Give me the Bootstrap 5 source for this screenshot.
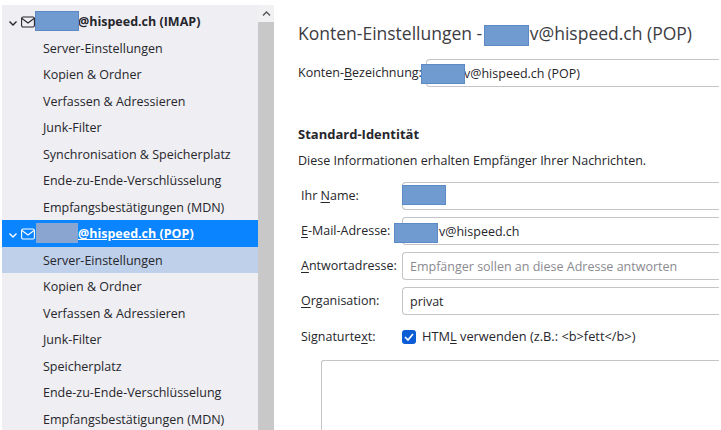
<!DOCTYPE html>
<html lang="de">
<head>
  <meta charset="UTF-8">
  <title>Konten-Einstellungen</title>
  <link href="https://cdn.jsdelivr.net/npm/bootstrap@5.3.0/dist/css/bootstrap.min.css" rel="stylesheet">
  <style>
    html, body { height: 430px; overflow: hidden; background: #fff; }
    body { font-family: "Open Sans", "Noto Sans", sans-serif; font-size: 12.5px; color: #26262b; }
    .acct-shell { height: 430px; overflow: hidden; }
    .acct-side { width: 274px; padding-top: 5px; background: #fff; flex: none; }
    .acct-tree { width: 256px; margin-left: 2px; background: #eeeef3; padding-top: 3px; height: 425px; overflow: hidden; }
    .acct-scroll { width: 16px; background: #f1f1f3; }
    .acct-thumb { background: #c8c8c8; height: 408px; }
    .acct-arrow { height: 17px; }
    .tree-row { height: 26.5px; line-height: 27.5px; padding-left: 41px; white-space: nowrap; }
    .tree-head { padding-left: 6px; font-weight: 700; position: relative; }
    .tree-head.on { background: #0a84ff; color: #fff; }
    .tree-head.on .acct-name { text-decoration: underline; }
    .tree-sub-on { background: #bfd0ea; }
    .tree-head svg { margin-right: 3px; vertical-align: -2px; }
    .acct-name { margin-left: 40px; }
    .blot { position: absolute; background: #6f9bd1; border: 1px solid #5d8ac4; }
    .acct-main { padding: 0 2px 0 24px; position: relative; min-width: 0; }
    .page-head { font-size: 17.5px; font-weight: 400; color: #3c3c42; margin: 20px 0 0; height: 26px; line-height: 26px; white-space: nowrap; }
    .form-line { display: flex; align-items: center; }
    .form-line label { flex: none; white-space: nowrap; margin: 0; }
    .form-line u { text-underline-offset: 2px; }
    .box-input { height: 28px; border: 1px solid #c4c4c8; border-right: 0; border-radius: 4px 0 0 4px; padding: 0 6px 0 7px; flex: 1; min-width: 0; background: #fff; line-height: 27px; white-space: nowrap; }
    .hint { color: #8a8a90; }
    .ident-lbl { width: 104px; padding-left: 3px; }
    .name-lbl { width: 128px; }
    .sec-head { font-size: 13px; font-weight: 700; margin: 0; }
    .chk-box { width: 14px; height: 14px; background: #0b5cd5; border-radius: 3px; flex: none; margin-right: 6px; display: flex; align-items: center; justify-content: center; }
    .chk-text { font-size: 12.8px; }
    .sig-box { height: 72px; margin: 13px 0 0 23px; border: 1px solid #c4c4c8; border-right: 0; border-bottom: 0; border-radius: 3px 0 0 0; }
  </style>
</head>
<body>
<div class="d-flex acct-shell">
  <div class="acct-side d-flex">
    <div class="acct-tree">
      <div class="tree-row tree-head">
        <svg width="10" height="10" viewBox="0 0 10 10" fill="none" stroke="currentColor" stroke-width="1.4"><path d="M1.5 3.5 5 7l3.5-3.5"/></svg><svg width="14" height="12" viewBox="0 0 14 12" fill="none" stroke="currentColor" stroke-width="1.1"><rect x=".6" y="1" width="12.8" height="10" rx="1.5"/><path d="M1 2.5 7 7l6-4.5"/></svg><span class="acct-name">@hispeed.ch (IMAP)</span>
        <span class="blot" style="left:33px;top:3px;width:44px;height:20px"></span>
      </div>
      <div class="tree-row">Server-Einstellungen</div>
      <div class="tree-row">Kopien &amp; Ordner</div>
      <div class="tree-row">Verfassen &amp; Adressieren</div>
      <div class="tree-row">Junk-Filter</div>
      <div class="tree-row">Synchronisation &amp; Speicherplatz</div>
      <div class="tree-row">Ende-zu-Ende-Verschlüsselung</div>
      <div class="tree-row">Empfangsbestätigungen (MDN)</div>
      <div class="tree-row tree-head on">
        <svg width="10" height="10" viewBox="0 0 10 10" fill="none" stroke="currentColor" stroke-width="1.4"><path d="M1.5 3.5 5 7l3.5-3.5"/></svg><svg width="14" height="12" viewBox="0 0 14 12" fill="none" stroke="currentColor" stroke-width="1.1"><rect x=".6" y="1" width="12.8" height="10" rx="1.5"/><path d="M1 2.5 7 7l6-4.5"/></svg><span class="acct-name">@hispeed.ch (POP)</span>
        <span class="blot" style="left:34px;top:3px;width:42px;height:20px;background:#8aa6d0;border:0"></span>
      </div>
      <div class="tree-row tree-sub-on">Server-Einstellungen</div>
      <div class="tree-row">Kopien &amp; Ordner</div>
      <div class="tree-row">Verfassen &amp; Adressieren</div>
      <div class="tree-row">Junk-Filter</div>
      <div class="tree-row">Speicherplatz</div>
      <div class="tree-row">Ende-zu-Ende-Verschlüsselung</div>
      <div class="tree-row">Empfangsbestätigungen (MDN)</div>
    </div>
    <div class="acct-scroll">
      <div class="acct-arrow d-flex justify-content-center align-items-center"><svg width="9" height="7" viewBox="0 0 9 7" fill="none" stroke="#555" stroke-width="1.4"><path d="M1 5.5 4.5 2 8 5.5"/></svg></div>
      <div class="acct-thumb"></div>
    </div>
  </div>
  <div class="acct-main flex-grow-1">
    <h1 class="page-head">Konten-Einstellungen - <span class="d-inline-block" style="width:43px"></span>v@hispeed.ch (POP)</h1>
    <span class="blot" style="left:210px;top:25px;width:45px;height:21px"></span>
    <div class="form-line" style="margin-top:13px">
      <label class="name-lbl">Konten-<u>B</u>ezeichnung:</label>
      <div class="box-input" style="padding-left:37px">v@hispeed.ch (POP)</div>
    </div>
    <span class="blot" style="left:147px;top:64px;width:44px;height:20px"></span>
    <h2 class="sec-head" style="margin-top:40px">Standard-Identität</h2>
    <p class="mb-0" style="margin-top:9px">Diese Informationen erhalten Empfänger Ihrer Nachrichten.</p>
    <div class="d-flex flex-column" style="margin-top:12px;gap:7px">
      <div class="form-line"><label class="ident-lbl">Ihr <u>N</u>ame:</label><div class="box-input">&nbsp;</div></div>
      <div class="form-line"><label class="ident-lbl"><u>E</u>-Mail-Adresse:</label><div class="box-input" style="padding-left:36px">v@hispeed.ch</div></div>
      <div class="form-line"><label class="ident-lbl"><u>A</u>ntwortadresse:</label><div class="box-input hint">Empfänger sollen an diese Adresse antworten</div></div>
      <div class="form-line"><label class="ident-lbl"><u>O</u>rganisation:</label><div class="box-input">privat</div></div>
    </div>
    <span class="blot" style="left:128px;top:185px;width:44px;height:20px"></span>
    <span class="blot" style="left:120px;top:223px;width:44px;height:20px"></span>
    <div class="form-line" style="margin-top:12px">
      <label class="ident-lbl">Signaturte<u>x</u>t:</label>
      <div class="chk-box"><svg width="10" height="8" viewBox="0 0 10 8" fill="none" stroke="#fff" stroke-width="1.7"><path d="M1 4l3 3 5-6"/></svg></div>
      <span class="chk-text">HTM<u>L</u> verwenden (z.B.: &lt;b&gt;fett&lt;/b&gt;)</span>
    </div>
    <div class="sig-box"></div>
  </div>
</div>
</body>
</html>
